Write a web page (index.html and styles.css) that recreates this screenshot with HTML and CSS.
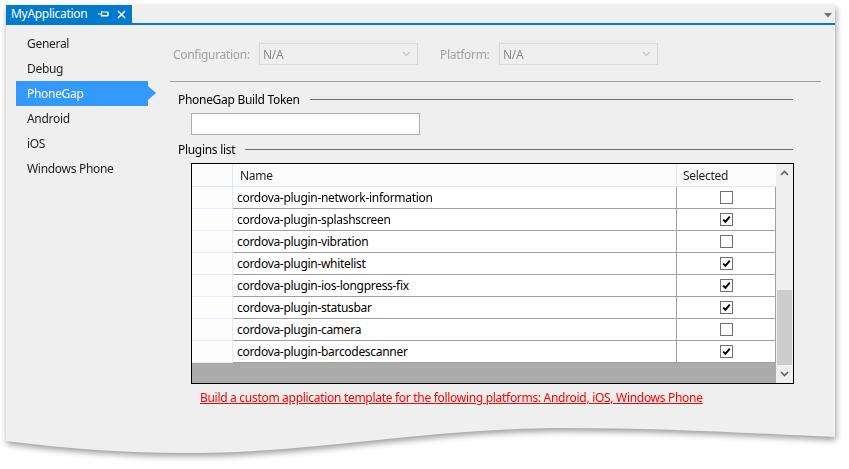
FILE: index.html
```html
<!DOCTYPE html>
<html>
<head>
<meta charset="utf-8">
<link rel="stylesheet" href="styles.css">
</head>
<body>
<div class="stage">
  <div class="window">
    <div class="tabbar">
      <div class="tab">
        <span class="tab-title">MyApplication</span>
        <svg class="pin" width="12" height="8" viewBox="0 0 12 8"><path d="M0 4H3M3.5 1V7M4 2H10V6H4M4 5.5H10M10 2V6" stroke="#fff" stroke-width="1" fill="none"/></svg>
        <svg class="close" width="9" height="9" viewBox="0 0 9 9"><path d="M1 1L8 8M8 1L1 8" stroke="#fff" stroke-width="1.5"/></svg>
      </div>
      <div class="tab-fill"></div>
      <svg class="menu-arrow" width="8" height="5" viewBox="0 0 8 5"><path d="M0 0H8L4 4.5Z" fill="#717171"/></svg>
    </div>
    <div class="body">
      <nav class="nav">
        <div class="nav-item">General</div>
        <div class="nav-item">Debug</div>
        <div class="nav-item active">PhoneGap</div>
        <div class="nav-item">Android</div>
        <div class="nav-item">iOS</div>
        <div class="nav-item">Windows Phone</div>
      </nav>
      <main class="content">
        <div class="config">
          <span class="cfg-label cfg-label-1">Configuration:</span>
          <div class="select"><span>N/A</span><svg width="9" height="6" viewBox="0 0 9 6"><path d="M1 1L4.5 4.5L8 1" stroke="#c2c2c2" stroke-width="1.2" fill="none"/></svg></div>
          <span class="cfg-label cfg-label-2">Platform:</span>
          <div class="select"><span>N/A</span><svg width="9" height="6" viewBox="0 0 9 6"><path d="M1 1L4.5 4.5L8 1" stroke="#c2c2c2" stroke-width="1.2" fill="none"/></svg></div>
        </div>
        <div class="sep"></div>
        <div class="group-title"><span>PhoneGap Build Token</span></div>
        <div class="token"></div>
        <div class="group-title"><span>Plugins list</span></div>
        <div class="grid">
          <div class="grid-main">
            <div class="table">
              <div class="hc rh"></div><div class="hc name">Name</div><div class="hc sel">Selected</div>

              <div class="c rh"></div><div class="c name">cordova-plugin-network-information</div><div class="c sel"><span class="cb"></span></div>
              <div class="c rh"></div><div class="c name">cordova-plugin-splashscreen</div><div class="c sel"><span class="cb"><svg viewBox="0 0 11 11" width="11" height="11"><path d="M2.2 5.6L4.4 7.8L8.8 2.6" stroke="#000" stroke-width="2" fill="none"/></svg></span></div>
              <div class="c rh"></div><div class="c name">cordova-plugin-vibration</div><div class="c sel"><span class="cb"></span></div>
              <div class="c rh"></div><div class="c name">cordova-plugin-whitelist</div><div class="c sel"><span class="cb"><svg viewBox="0 0 11 11" width="11" height="11"><path d="M2.2 5.6L4.4 7.8L8.8 2.6" stroke="#000" stroke-width="2" fill="none"/></svg></span></div>
              <div class="c rh"></div><div class="c name">cordova-plugin-ios-longpress-fix</div><div class="c sel"><span class="cb"><svg viewBox="0 0 11 11" width="11" height="11"><path d="M2.2 5.6L4.4 7.8L8.8 2.6" stroke="#000" stroke-width="2" fill="none"/></svg></span></div>
              <div class="c rh"></div><div class="c name">cordova-plugin-statusbar</div><div class="c sel"><span class="cb"><svg viewBox="0 0 11 11" width="11" height="11"><path d="M2.2 5.6L4.4 7.8L8.8 2.6" stroke="#000" stroke-width="2" fill="none"/></svg></span></div>
              <div class="c rh"></div><div class="c name">cordova-plugin-camera</div><div class="c sel"><span class="cb"></span></div>
              <div class="c rh"></div><div class="c name">cordova-plugin-barcodescanner</div><div class="c sel"><span class="cb"><svg viewBox="0 0 11 11" width="11" height="11"><path d="M2.2 5.6L4.4 7.8L8.8 2.6" stroke="#000" stroke-width="2" fill="none"/></svg></span></div>
            </div>
          </div>
          <div class="scrollbar">
            <svg class="sb-arrow" width="9" height="6" viewBox="0 0 9 6"><path d="M1 5L4.5 1.5L8 5" stroke="#606060" stroke-width="1.6" fill="none"/></svg>
            <div class="sb-track"><div class="sb-thumb"></div></div>
            <svg class="sb-arrow" width="9" height="6" viewBox="0 0 9 6"><path d="M1 1L4.5 4.5L8 1" stroke="#606060" stroke-width="1.6" fill="none"/></svg>
          </div>
        </div>
        <a class="link" href="#">Build a custom application template for the following platforms: Android, iOS, Windows Phone</a>
      </main>
    </div>
  </div>
</div>
</body>
</html>
```
FILE: styles.css
```css
html, body {
  margin: 0;
  padding: 0;
  background: #ffffff;
}
body {
  font-family: "Noto Sans", "Open Sans", sans-serif;
  font-size: 12px;
  letter-spacing: -0.3px;
  color: #1e1e1e;
  width: 849px;
  height: 469px;
  overflow: hidden;
}
.stage {
  padding: 5px 0 0 6px;
  filter: drop-shadow(1px 3px 3px rgba(0, 0, 0, 0.4));
}
.window {
  width: 829px;
  height: 452px;
  background: #efefef;
  clip-path: path("M0 0 H829 V432 C760 429 660 423 560 423 C440 423 330 443 230 447 C150 450 80 446 0 436 Z");
}
.tabbar {
  display: flex;
  align-items: stretch;
  height: 18px;
  border-bottom: 2px solid #007acc;
}
.tab {
  width: 126px;
  background: #007acc;
  color: #fff;
  display: flex;
  align-items: center;
  padding-left: 5px;
  box-sizing: border-box;
}
.tab-title {
  line-height: 18px;
}
.pin {
  margin-left: 11px;
}
.close {
  margin-left: 7px;
}
.tab-fill {
  flex: 1;
}
.menu-arrow {
  align-self: center;
  margin: 2px 3px 0 0;
}
.body {
  display: flex;
}
.nav {
  width: 164px;
  padding-top: 6px;
  flex-shrink: 0;
}
.nav-item {
  position: relative;
  margin-left: 10px;
  width: 132px;
  height: 25px;
  line-height: 25px;
  padding-left: 11px;
  box-sizing: border-box;
  color: #1e1e1e;
}
.nav-item.active {
  background: #3399ff;
  color: #fff;
}
.nav-item.active::after {
  content: "";
  position: absolute;
  right: -8px;
  top: 5px;
  border-left: 8px solid #3399ff;
  border-top: 7.5px solid transparent;
  border-bottom: 7.5px solid transparent;
}
.content {
  flex: 1;
  padding-right: 14px;
}
.config {
  display: flex;
  align-items: center;
  padding-top: 18px;
  padding-left: 3px;
  height: 22px;
}
.cfg-label {
  color: #a2a2a2;
}
.cfg-label-1 {
  width: 86px;
}
.cfg-label-2 {
  width: 59px;
  margin-left: 22px;
}
.select {
  width: 159px;
  height: 22px;
  box-sizing: border-box;
  border: 1px solid #d9d9d9;
  display: flex;
  align-items: center;
  justify-content: space-between;
  padding: 0 6px 0 3px;
  color: #8a8a8a;
}
.sep {
  margin-top: 16px;
  height: 1px;
  background: #a0a0a0;
}
.group-title {
  display: flex;
  align-items: center;
  height: 16px;
  margin: 9px 28px 0 8px;
  color: #000;
}
.group-title::after {
  content: "";
  flex: 1;
  height: 1px;
  background: #6d6d6d;
  margin-left: 10px;
}
.token {
  margin: 6px 0 6px 21px;
  width: 229px;
  height: 22px;
  box-sizing: border-box;
  background: #fff;
  border: 1px solid #abadb3;
}
.token + .group-title {
  margin-top: 0;
}
.grid {
  margin: 6px 0 0 21px;
  width: 603px;
  height: 221px;
  box-sizing: border-box;
  border: 1px solid #000;
  display: flex;
}
.grid-main {
  width: 584px;
  background: #ababab;
}
.table {
  display: grid;
  grid-template-columns: 41px 444px 99px;
  grid-template-rows: 23px repeat(8, 22px);
  background: #fff;
}
.hc, .c {
  box-sizing: border-box;
  display: flex;
  align-items: center;
  white-space: nowrap;
}
.hc {
  background: #fbfbfb;
  border-bottom: 1px solid #dfe7f1;
  border-right: 1px solid #dfe7f1;
}
.hc.sel {
  border-right: none;
  padding-left: 6px;
}
.hc.name {
  padding-left: 7px;
}
.c {
  border-bottom: 1px solid #a0a0a0;
  border-right: 1px solid #a0a0a0;
  background: #fff;
}
.c.rh {
  background: #fdfdfd;
  border-right: 1px solid #e3ebf6;
  border-bottom: 1px solid #e3ebf6;
}
.c.name {
  padding-left: 4px;
  color: #000;
}
.c.sel {
  justify-content: center;
  padding-left: 1px;
}
.cb {
  width: 13px;
  height: 13px;
  box-sizing: border-box;
  border: 1px solid #707070;
  background: #fff;
  display: flex;
  align-items: center;
  justify-content: center;
}
.scrollbar {
  width: 17px;
  background: #efefef;
  display: flex;
  flex-direction: column;
  align-items: center;
}
.sb-arrow {
  margin: 6px 0;
  flex-shrink: 0;
}
.sb-track {
  flex: 1;
  width: 100%;
  display: flex;
  flex-direction: column;
  justify-content: flex-end;
}
.sb-thumb {
  height: 75px;
  margin: 0 1px;
  background: #cdcdcd;
}
.link {
  display: block;
  margin: 6px 0 0 30px;
  color: #ff0000;
  text-decoration: underline;
  line-height: 16px;
}
```
